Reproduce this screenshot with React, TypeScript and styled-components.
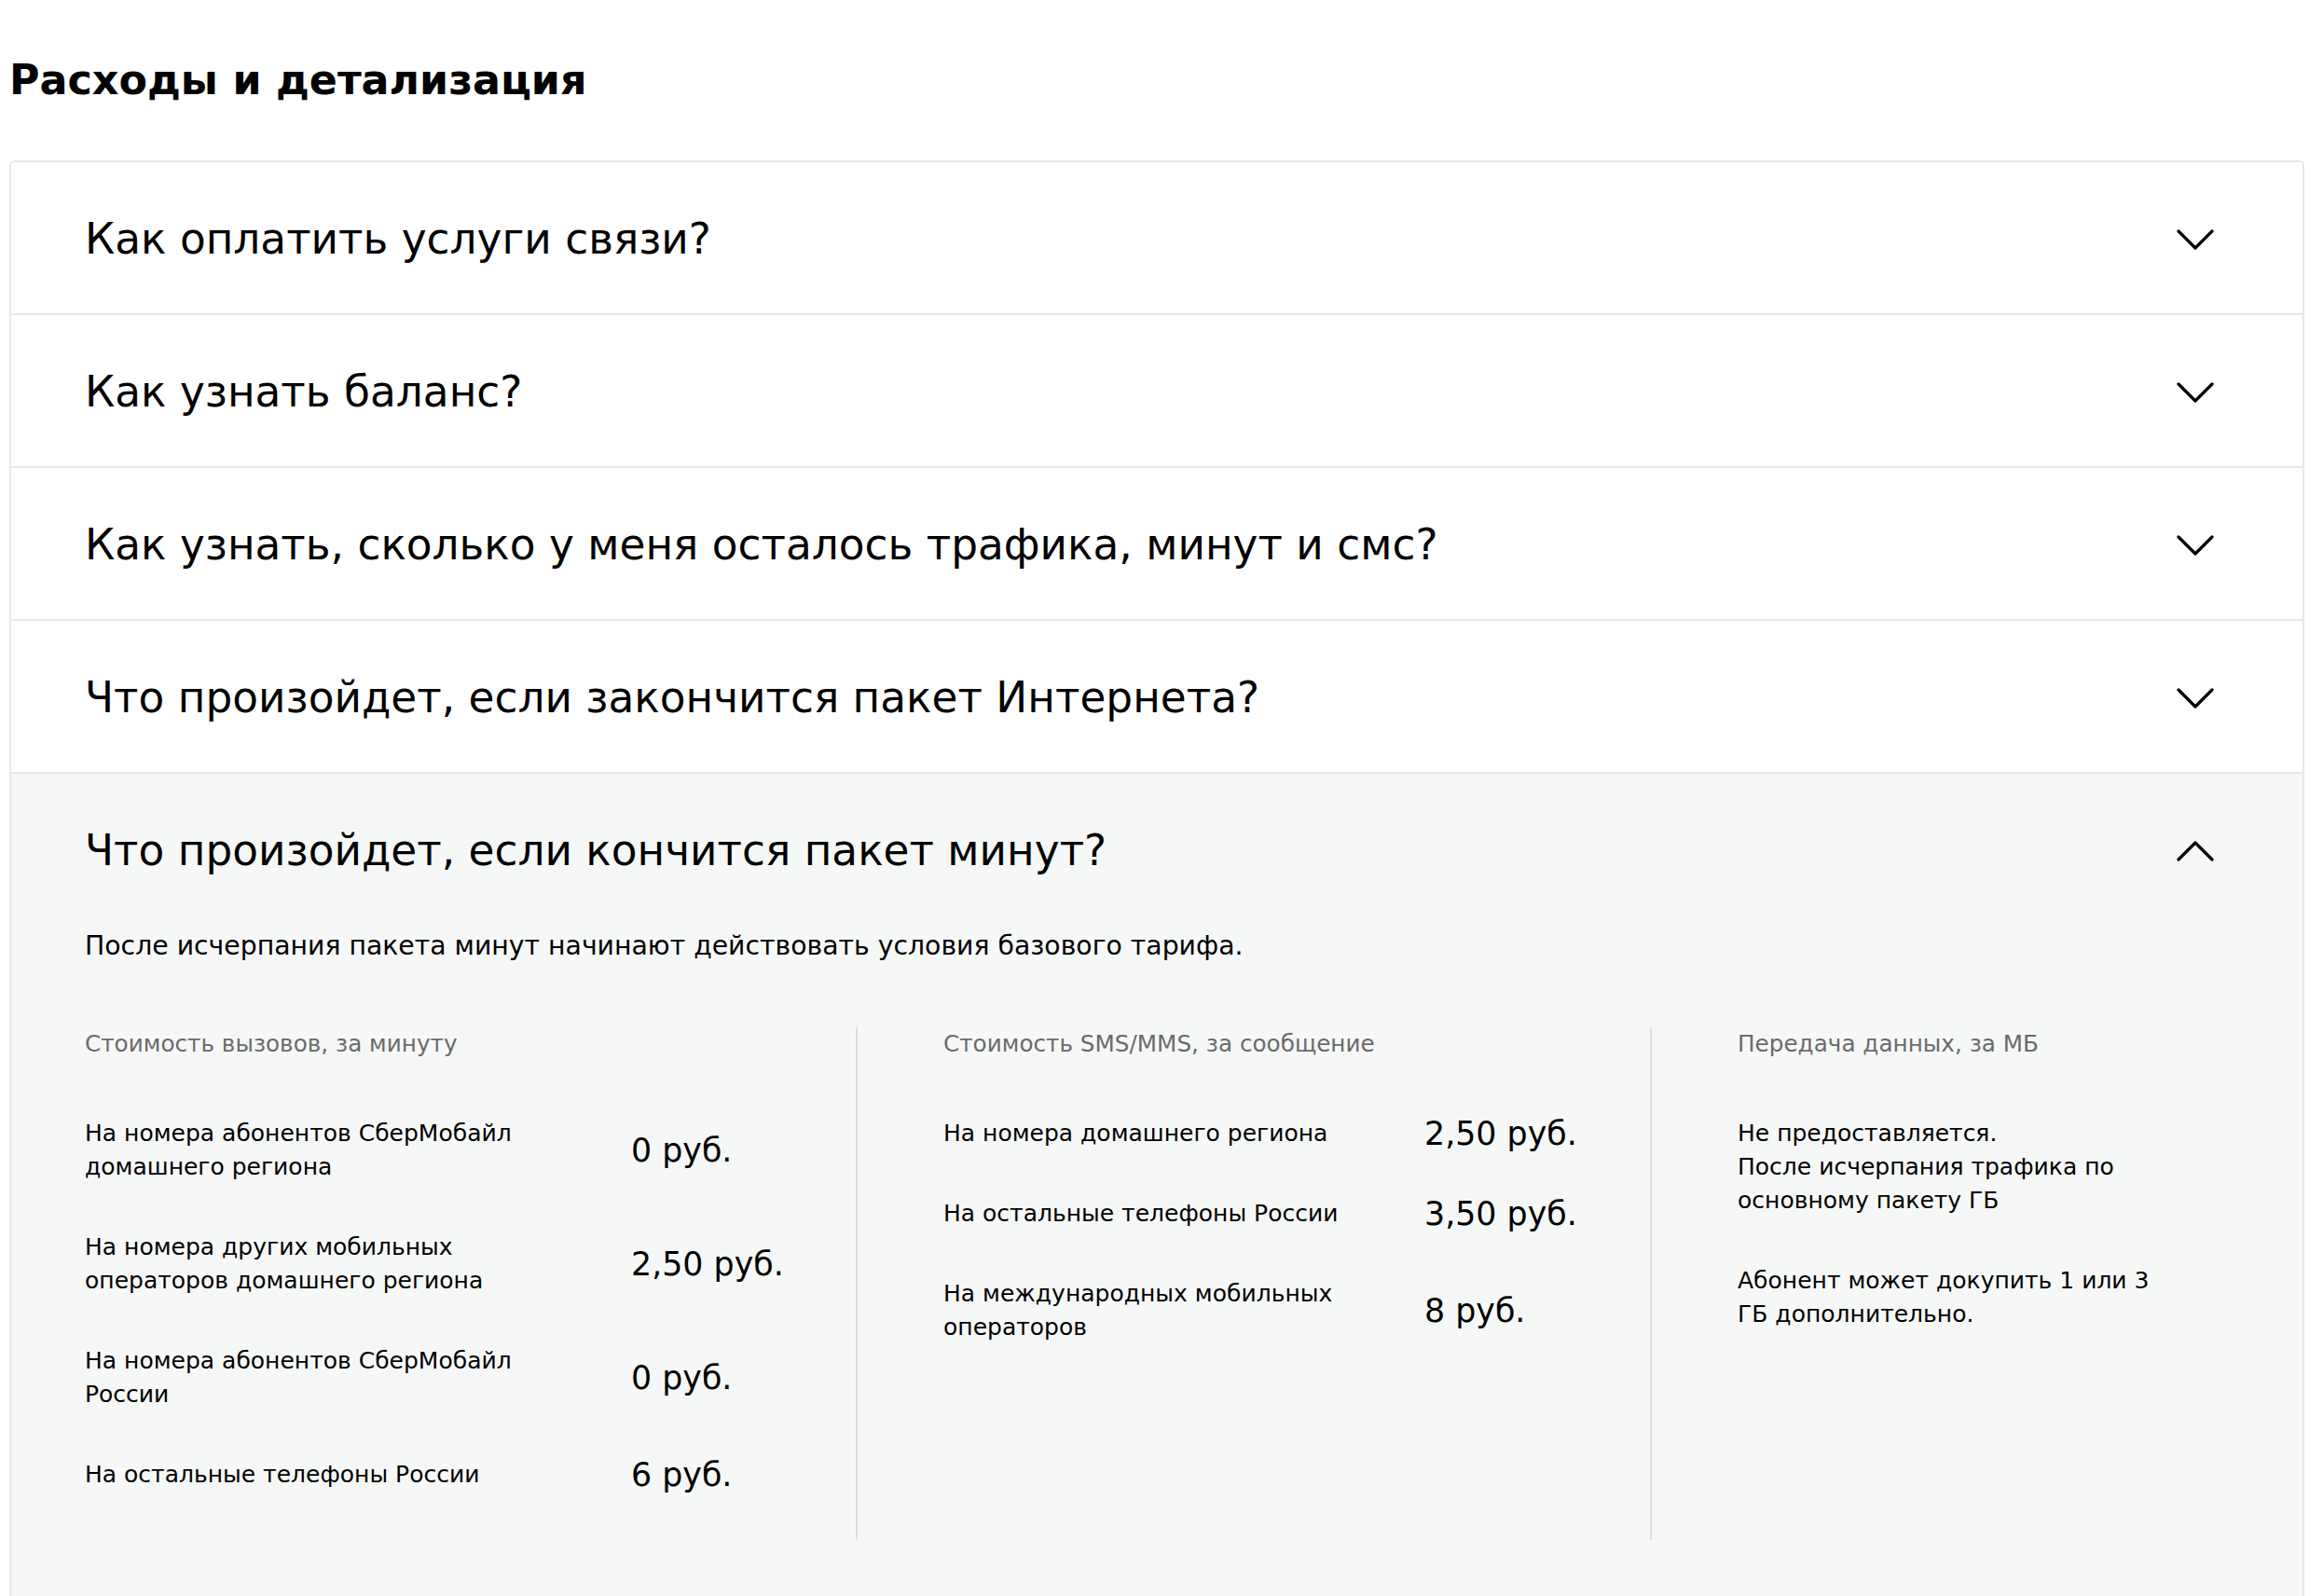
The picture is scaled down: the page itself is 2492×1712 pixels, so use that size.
import React from "react";
import styled, { createGlobalStyle } from "styled-components";

const GlobalStyle = createGlobalStyle`
  body {
    margin: 0;
    background: #ffffff;
    font-family: "DejaVu Sans", "Liberation Sans", sans-serif;
    color: #000000;
  }
`;

const Page = styled.div`
  padding: 0 20px 0 10px;
`;

const Title = styled.h2`
  margin: 0 0 58px;
  padding-top: 58px;
  font-size: 44.4px;
  line-height: 56px;
  font-weight: 700;
`;

const Card = styled.div`
  border: 2px solid #e8e8e8;
  border-radius: 6px;
  overflow: hidden;
`;

const Item = styled.div<{ $open?: boolean }>`
  background: ${(p) => (p.$open ? "#f6f8f7" : "#ffffff")};
  & + & {
    border-top: 2px solid #e8e8e8;
  }
`;

const Header = styled.div`
  height: 162px;
  display: flex;
  align-items: center;
  justify-content: space-between;
  padding: 4px 95px 0 79px;
  box-sizing: border-box;
`;

const Question = styled.div`
  font-size: 45.4px;
  line-height: 50px;
`;

const Body = styled.div`
  padding: 5px 94px 80px 79px;
`;

const Lead = styled.p`
  margin: 0 0 69px;
  font-size: 28.3px;
  line-height: 36px;
`;

const Columns = styled.div`
  display: grid;
  grid-template-columns: 827px 852px 1fr;
`;

const Column = styled.div<{ $divider?: boolean }>`
  display: flex;
  flex-direction: column;
  gap: 50px;
  padding-left: ${(p) => (p.$divider ? "92px" : "0")};
  border-left: ${(p) => (p.$divider ? "2px solid #dddddd" : "none")};
  padding-bottom: 52px;
`;

const ColTitle = styled.div`
  font-size: 24.7px;
  line-height: 36px;
  color: #6b6b6b;
  margin-bottom: 10px;
`;

const Row = styled.div<{ $label: number }>`
  display: grid;
  grid-template-columns: ${(p) => p.$label}px auto;
  align-items: center;
`;

const Label = styled.div`
  font-size: 25px;
  line-height: 36px;
  padding-right: 80px;
`;

const Price = styled.div`
  font-size: 34.8px;
  line-height: 36px;
`;

const Note = styled.p`
  margin: 0;
  max-width: 450px;
  font-size: 25px;
  line-height: 36px;
`;

const Chevron = ({ up }: { up?: boolean }) => (
  <svg width="40" height="22" viewBox="0 0 40 22" fill="none">
    <polyline
      points={up ? "2,20 20,2 38,20" : "2,2 20,20 38,2"}
      stroke="#000"
      strokeWidth="3.2"
      strokeLinecap="round"
      strokeLinejoin="round"
    />
  </svg>
);

const questions = [
  "Как оплатить услуги связи?",
  "Как узнать баланс?",
  "Как узнать, сколько у меня осталось трафика, минут и смс?",
  "Что произойдет, если закончится пакет Интернета?",
];

const calls = [
  ["На номера абонентов СберМобайл домашнего региона", "0 руб."],
  ["На номера других мобильных операторов домашнего региона", "2,50 руб."],
  ["На номера абонентов СберМобайл России", "0 руб."],
  ["На остальные телефоны России", "6 руб."],
];

const sms = [
  ["На номера домашнего региона", "2,50 руб."],
  ["На остальные телефоны России", "3,50 руб."],
  ["На международных мобильных операторов", "8 руб."],
];

export default function App() {
  return (
    <Page>
      <GlobalStyle />
      <Title>Расходы и детализация</Title>
      <Card>
        {questions.map((q) => (
          <Item key={q}>
            <Header>
              <Question>{q}</Question>
              <Chevron />
            </Header>
          </Item>
        ))}
        <Item $open>
          <Header>
            <Question>Что произойдет, если кончится пакет минут?</Question>
            <Chevron up />
          </Header>
          <Body>
            <Lead>
              После исчерпания пакета минут начинают действовать условия базового тарифа.
            </Lead>
            <Columns>
              <Column>
                <ColTitle>Стоимость вызовов, за минуту</ColTitle>
                {calls.map(([l, p]) => (
                  <Row key={l} $label={586}>
                    <Label>{l}</Label>
                    <Price>{p}</Price>
                  </Row>
                ))}
              </Column>
              <Column $divider>
                <ColTitle>Стоимость SMS/MMS, за сообщение</ColTitle>
                {sms.map(([l, p]) => (
                  <Row key={l} $label={516}>
                    <Label>{l}</Label>
                    <Price>{p}</Price>
                  </Row>
                ))}
              </Column>
              <Column $divider>
                <ColTitle>Передача данных, за МБ</ColTitle>
                <Note>
                  Не предоставляется.
                  <br />
                  После исчерпания трафика по основному пакету ГБ
                </Note>
                <Note>Абонент может докупить 1 или 3 ГБ дополнительно.</Note>
              </Column>
            </Columns>
          </Body>
        </Item>
      </Card>
    </Page>
  );
}
